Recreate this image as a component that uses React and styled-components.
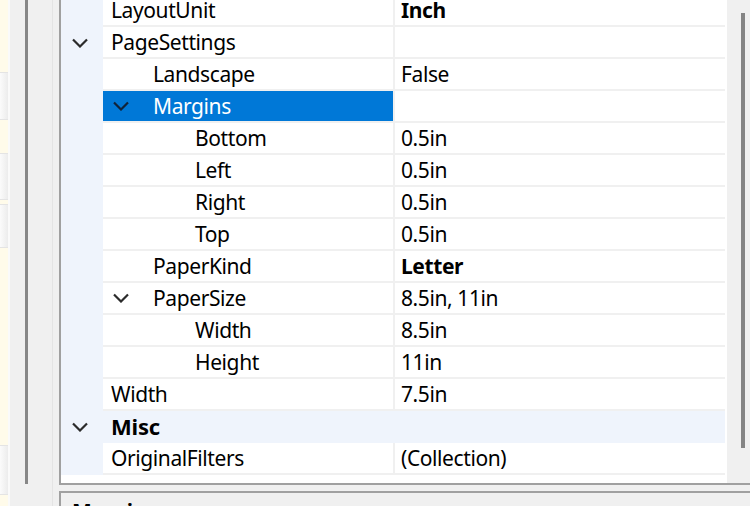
import React from 'react'
import styled, { createGlobalStyle } from 'styled-components'

const GlobalStyle = createGlobalStyle`
  html, body {
    margin: 0;
    padding: 0;
    background: #f0f0f0;
    overflow: hidden;
  }
  body {
    font-family: "Noto Sans", "DejaVu Sans", sans-serif;
    font-size: 21px;
    color: #000;
  }
`

const Frame = styled.div`
  display: flex;
  width: 750px;
  height: 506px;
  overflow: hidden;
  background: #f0f0f0;
`

const ToolStrip = styled.div`
  width: 8px;
  display: flex;
  flex-direction: column;
  border-right: 2px solid #fafafa;
`

const StripBlock = styled.div`
  height: ${p => p.$h}px;
  flex-shrink: 0;
  background: ${p => (p.$kind === 'tile' ? 'linear-gradient(90deg, #fbfbfb, #ececec)' : '#fffbea')};
  border-top: ${p => (p.$kind === 'tile' ? '1px solid #e4e4e4' : 'none')};
  border-bottom: ${p => (p.$kind === 'tile' ? '1px solid #e4e4e4' : 'none')};
`

const Splitter = styled.div`
  width: 49px;
  display: flex;
  background: #f0f0f0;
`

const SplitThumb = styled.div`
  width: 3px;
  height: 484px;
  margin-left: 15px;
  background: #878787;
`

const SplitLine = styled.div`
  width: 1px;
  margin-left: 24px;
  background: #e4e4e4;
`

const Main = styled.div`
  flex: 1;
  display: flex;
  flex-direction: column;
  min-width: 0;
`

const GridPanel = styled.div`
  height: 483px;
  display: flex;
  border-left: 2px solid #a0a0a0;
  border-bottom: 2px solid #a0a0a0;
  background: #fff;
  flex-shrink: 0;
`

const Grid = styled.div`
  width: 666px;
  display: flex;
  flex-direction: column;
  overflow: hidden;
`

const Rows = styled.div`
  margin-top: -5px;
  width: 664px;
  display: flex;
  flex-direction: column;
`

const Row = styled.div`
  display: flex;
  height: 32px;
  flex-shrink: 0;
`

const Gutter = styled.div`
  width: 42px;
  flex-shrink: 0;
  background: #eff4fc;
  display: flex;
  align-items: center;
  padding-left: 10px;
  box-sizing: border-box;
  height: 32px;
`

const LabelCell = styled.div`
  width: 290px;
  height: 32px;
  flex-shrink: 0;
  box-sizing: border-box;
  display: flex;
  align-items: center;
  line-height: 30px;
  padding-left: ${p => p.$pad}px;
  background: ${p => (p.$selected ? '#0078d7' : '#fff')};
  color: ${p => (p.$selected ? '#fff' : '#000')};
  border-bottom: 2px solid #f0f0f0;
  white-space: nowrap;
  overflow: hidden;
  letter-spacing: -0.4px;
`

const ColumnLine = styled.div`
  width: 2px;
  flex-shrink: 0;
  background: #f0f0f0;
`

const ValueCell = styled.div`
  flex: 1;
  height: 32px;
  box-sizing: border-box;
  line-height: 30px;
  padding-left: 6px;
  border-bottom: 2px solid #f0f0f0;
  font-weight: ${p => (p.$bold ? 700 : 400)};
  white-space: nowrap;
  letter-spacing: -0.4px;
`

const CategoryRow = styled.div`
  display: flex;
  height: 32px;
  flex-shrink: 0;
  background: #eff4fc;
`

const CategoryLabel = styled.div`
  height: 30px;
  line-height: 30px;
  padding-left: 8px;
  font-weight: 700;
  font-size: 22px;
  letter-spacing: -0.2px;
`

const Expander = styled.span`
  width: 18px;
  height: 10px;
  display: inline-flex;
  flex-shrink: 0;
  margin-right: ${p => p.$gap || 0}px;
`

const ScrollTrack = styled.div`
  flex: 1;
  background: #f0f0f0;
  display: flex;
  padding-left: 14px;
  padding-top: 13px;
`

const ScrollThumb = styled.div`
  width: 4px;
  height: 435px;
  background: #858585;
`

const PanelGap = styled.div`
  height: 6px;
  flex-shrink: 0;
`

const DescPanel = styled.div`
  flex: 1;
  border-top: 2px solid #a0a0a0;
  border-left: 2px solid #a0a0a0;
  padding-left: 11px;
  padding-top: 6px;
  line-height: 25px;
  font-weight: 700;
  background: #f0f0f0;
`

const Chevron = ({ color = '#2b2b2b' }) => (
  <svg width='18' height='10' viewBox='0 0 18 10'>
    <path d='M2 1.5 L9 8.5 L16 1.5' fill='none' stroke={color} strokeWidth='2.2' />
  </svg>
)

const strip = [
  ['note', 72], ['tile', 46], ['note', 33], ['tile', 45], ['note', 4], ['tile', 42],
  ['note', 197], ['tile', 48], ['note', 19]
]

const props = [
  { label: 'LayoutUnit', value: 'Inch', level: 0, bold: true },
  { label: 'PageSettings', value: '', level: 0, open: true },
  { label: 'Landscape', value: 'False', level: 1 },
  { label: 'Margins', value: '', level: 1, open: true, selected: true },
  { label: 'Bottom', value: '0.5in', level: 2 },
  { label: 'Left', value: '0.5in', level: 2 },
  { label: 'Right', value: '0.5in', level: 2 },
  { label: 'Top', value: '0.5in', level: 2 },
  { label: 'PaperKind', value: 'Letter', level: 1, bold: true },
  { label: 'PaperSize', value: '8.5in, 11in', level: 1, open: true },
  { label: 'Width', value: '8.5in', level: 2 },
  { label: 'Height', value: '11in', level: 2 },
  { label: 'Width', value: '7.5in', level: 0 },
  { category: 'Misc' },
  { label: 'OriginalFilters', value: '(Collection)', level: 0 }
]

const PropRow = ({ p }) => {
  if (p.category) {
    return (
      <CategoryRow>
        <Gutter><Expander><Chevron /></Expander></Gutter>
        <CategoryLabel>{p.category}</CategoryLabel>
      </CategoryRow>
    )
  }
  const nested = p.open && p.level > 0
  const pad = 8 + 42 * p.level - (nested ? 41 : 0)
  return (
    <Row>
      <Gutter>
        {p.open && p.level === 0 && <Expander><Chevron /></Expander>}
      </Gutter>
      <LabelCell $pad={pad} $selected={p.selected}>
        {nested && <Expander $gap={23}><Chevron color={p.selected ? '#10233a' : '#2b2b2b'} /></Expander>}
        {p.label}
      </LabelCell>
      <ColumnLine />
      <ValueCell $bold={p.bold}>{p.value}</ValueCell>
    </Row>
  )
}

export default function App () {
  return (
    <>
      <GlobalStyle />
      <Frame>
        <ToolStrip>
          {strip.map(([kind, h], i) => <StripBlock key={i} $kind={kind} $h={h} />)}
        </ToolStrip>
        <Splitter>
          <SplitThumb />
          <SplitLine />
        </Splitter>
        <Main>
          <GridPanel>
            <Grid>
              <Rows>
                {props.map((p, i) => <PropRow key={i} p={p} />)}
              </Rows>
            </Grid>
            <ScrollTrack>
              <ScrollThumb />
            </ScrollTrack>
          </GridPanel>
          <PanelGap />
          <DescPanel>Margins</DescPanel>
        </Main>
      </Frame>
    </>
  )
}
